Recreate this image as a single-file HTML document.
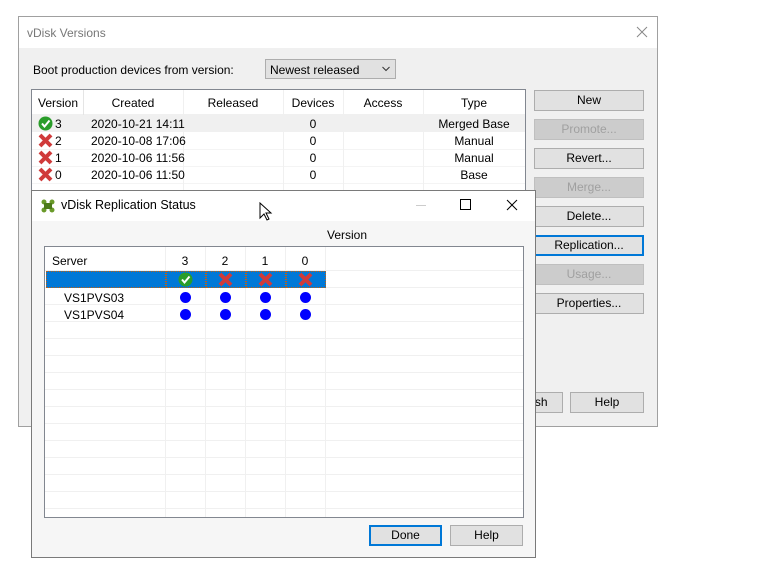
<!DOCTYPE html><html><head><style>
*{box-sizing:border-box;margin:0;padding:0}
body{width:757px;height:566px;background:#fff;position:relative;overflow:hidden;font-family:"Liberation Sans",Arial,sans-serif;font-size:12px;color:#000}
.a{position:absolute}
.btn{position:absolute;background:#e1e1e1;border:1px solid #adadad;text-align:center;line-height:18px;font-size:12px}
.dis{color:#a0a0a0;background:#cccccc;border-color:#bfbfbf}
.c{position:absolute;text-align:center}
.dot{position:absolute;width:11px;height:11px;border-radius:50%;background:#0000ff}
</style></head><body>
<div class="a" style="left:18px;top:16px;width:640px;height:411px;background:#f0f0f0;border:1px solid #a0a0a0"></div>
<div class="a" style="left:19px;top:17px;width:638px;height:31px;background:#fff"></div>
<div class="a" style="left:27px;top:26px;color:#777">vDisk Versions</div>
<svg class="a" style="left:636px;top:26px" width="12" height="12"><path d="M1 1l10 10M11 1L1 11" stroke="#888" stroke-width="1"/></svg>
<div class="a" style="left:33px;top:63px">Boot production devices from version:</div>
<div class="a" style="left:265px;top:59px;width:131px;height:20px;background:#e1e1e1;border:1px solid #adadad;padding:3px 0 0 4px">Newest released<svg class="a" style="left:116px;top:6px" width="8" height="6"><path d="M0.5 1l3.5 3.5L7.5 1" stroke="#333" fill="none"/></svg></div>
<div class="a" style="left:31px;top:89px;width:495px;height:110px;background:#fff;border:1px solid #828790"></div>
<div class="a" style="left:32px;top:115px;width:493px;height:17px;background:#f0f0f0"></div>
<div class="a" style="left:32px;top:90px;width:493px;height:25px;border-bottom:1px solid #f0f0f0"></div>
<div class="a" style="left:32px;top:149px;width:493px;height:1px;background:#f4f4f4"></div>
<div class="a" style="left:32px;top:166px;width:493px;height:1px;background:#f4f4f4"></div>
<div class="a" style="left:32px;top:183px;width:493px;height:1px;background:#f4f4f4"></div>
<div class="a" style="left:83px;top:90px;width:1px;height:25px;background:#e5e5e5"></div>
<div class="a" style="left:183px;top:90px;width:1px;height:100px;background:#f0f0f0"></div>
<div class="a" style="left:283px;top:90px;width:1px;height:100px;background:#f0f0f0"></div>
<div class="a" style="left:343px;top:90px;width:1px;height:100px;background:#f0f0f0"></div>
<div class="a" style="left:423px;top:90px;width:1px;height:100px;background:#f0f0f0"></div>
<div class="c" style="left:33px;top:96px;width:50px">Version</div>
<div class="c" style="left:83px;top:96px;width:100px">Created</div>
<div class="c" style="left:183px;top:96px;width:100px">Released</div>
<div class="c" style="left:283px;top:96px;width:60px">Devices</div>
<div class="c" style="left:343px;top:96px;width:80px">Access</div>
<div class="c" style="left:423px;top:96px;width:102px">Type</div>
<div class="a" style="left:38px;top:116px"><svg width="15" height="15"><circle cx="7.5" cy="7.5" r="7" fill="#2a9d2a"/><path d="M4 7.5l2.5 3 5-6" stroke="#fff" stroke-width="2" fill="none"/></svg></div>
<div class="a" style="left:38px;top:133px"><svg width="15" height="15"><path d="M2 2l11 11M13 2L2 13" stroke="#d03a3a" stroke-width="4"/></svg></div>
<div class="a" style="left:38px;top:150px"><svg width="15" height="15"><path d="M2 2l11 11M13 2L2 13" stroke="#d03a3a" stroke-width="4"/></svg></div>
<div class="a" style="left:38px;top:167px"><svg width="15" height="15"><path d="M2 2l11 11M13 2L2 13" stroke="#d03a3a" stroke-width="4"/></svg></div>
<div class="a" style="left:55px;top:117px">3</div><div class="a" style="left:55px;top:134px">2</div><div class="a" style="left:55px;top:151px">1</div><div class="a" style="left:55px;top:168px">0</div>
<div class="a" style="left:91px;top:117px">2020-10-21 14:11</div><div class="a" style="left:91px;top:134px">2020-10-08 17:06</div><div class="a" style="left:91px;top:151px">2020-10-06 11:56</div><div class="a" style="left:91px;top:168px">2020-10-06 11:50</div>
<div class="c" style="left:283px;top:117px;width:60px">0</div><div class="c" style="left:283px;top:134px;width:60px">0</div><div class="c" style="left:283px;top:151px;width:60px">0</div><div class="c" style="left:283px;top:168px;width:60px">0</div>
<div class="c" style="left:423px;top:117px;width:102px">Merged Base</div><div class="c" style="left:423px;top:134px;width:102px">Manual</div><div class="c" style="left:423px;top:151px;width:102px">Manual</div><div class="c" style="left:423px;top:168px;width:102px">Base</div>
<div class="btn" style="left:534px;top:90px;width:110px;height:21px">New</div>
<div class="btn dis" style="left:534px;top:119px;width:110px;height:21px">Promote...</div>
<div class="btn" style="left:534px;top:148px;width:110px;height:21px">Revert...</div>
<div class="btn dis" style="left:534px;top:177px;width:110px;height:21px">Merge...</div>
<div class="btn" style="left:534px;top:206px;width:110px;height:21px">Delete...</div>
<div class="btn" style="left:534px;top:235px;width:110px;height:21px;border:2px solid #0078d7;line-height:17px">Replication...</div>
<div class="btn dis" style="left:534px;top:264px;width:110px;height:21px">Usage...</div>
<div class="btn" style="left:534px;top:293px;width:110px;height:21px">Properties...</div>
<div class="btn" style="left:490px;top:392px;width:73px;height:21px">Refresh</div>
<div class="btn" style="left:570px;top:392px;width:74px;height:21px">Help</div>
<div class="a" style="left:31px;top:190px;width:505px;height:368px;background:#f6f6f6;border:1px solid #7a7a7a"></div>
<div class="a" style="left:32px;top:191px;width:503px;height:30px;background:#fff"></div>
<div class="a" style="left:41px;top:199px"><svg width="14" height="14"><g fill="#6a9a2a"><circle cx="3" cy="3" r="2.5"/><circle cx="11" cy="3" r="2.5"/><circle cx="3" cy="11" r="2.5"/><circle cx="11" cy="11" r="2.5"/><rect x="3" y="4" width="8" height="6" fill="#4c7a1a"/></g></svg></div>
<div class="a" style="left:61px;top:198px;font-size:12.5px">vDisk Replication Status</div>
<div class="a" style="left:416px;top:205px;width:10px;height:1px;background:#ccc"></div>
<div class="a" style="left:460px;top:199px;width:11px;height:11px;border:1px solid #000"></div>
<svg class="a" style="left:506px;top:199px" width="12" height="12"><path d="M1 1l10 10M11 1L1 11" stroke="#000" stroke-width="1"/></svg>
<svg class="a" style="left:259px;top:202px" width="14" height="20"><path d="M1 1v15l4-4 3 6 2-1-3-6h5z" fill="#fff" stroke="#000"/></svg>
<div class="a" style="left:327px;top:228px">Version</div>
<div class="a" style="left:44px;top:246px;width:480px;height:272px;background:#fff;border:1px solid #828790"></div>
<div class="a" style="left:165px;top:247px;width:1px;height:270px;background:#f0f0f0"></div>
<div class="a" style="left:205px;top:247px;width:1px;height:270px;background:#f0f0f0"></div>
<div class="a" style="left:245px;top:247px;width:1px;height:270px;background:#f0f0f0"></div>
<div class="a" style="left:285px;top:247px;width:1px;height:270px;background:#f0f0f0"></div>
<div class="a" style="left:325px;top:247px;width:1px;height:270px;background:#f0f0f0"></div>
<div class="a" style="left:45px;top:247px;width:478px;height:270px;background:repeating-linear-gradient(to bottom,transparent 0,transparent 16px,#f0f0f0 16px,#f0f0f0 17px);background-position:0 7px"></div>
<div class="a" style="left:46px;top:271px;width:120px;height:17px;background:#0078d7;border:1px dotted #c06010"></div>
<div class="a" style="left:166px;top:271px;width:40px;height:17px;background:#0078d7;border:1px dotted #c06010"></div>
<div class="a" style="left:206px;top:271px;width:40px;height:17px;background:#0078d7;border:1px dotted #c06010"></div>
<div class="a" style="left:246px;top:271px;width:40px;height:17px;background:#0078d7;border:1px dotted #c06010"></div>
<div class="a" style="left:286px;top:271px;width:40px;height:17px;background:#0078d7;border:1px dotted #c06010"></div>
<div class="a" style="left:52px;top:254px">Server</div>
<div class="c" style="left:165px;top:254px;width:40px">3</div><div class="c" style="left:205px;top:254px;width:40px">2</div><div class="c" style="left:245px;top:254px;width:40px">1</div><div class="c" style="left:285px;top:254px;width:40px">0</div>
<div class="a" style="left:178px;top:272px"><svg width="15" height="15"><circle cx="7.5" cy="7.5" r="7" fill="#2a9d2a"/><path d="M4 7.5l2.5 3 5-6" stroke="#fff" stroke-width="2" fill="none"/></svg></div>
<div class="a" style="left:218px;top:272px"><svg width="15" height="15"><path d="M2 2l11 11M13 2L2 13" stroke="#d03a3a" stroke-width="4"/></svg></div>
<div class="a" style="left:258px;top:272px"><svg width="15" height="15"><path d="M2 2l11 11M13 2L2 13" stroke="#d03a3a" stroke-width="4"/></svg></div>
<div class="a" style="left:298px;top:272px"><svg width="15" height="15"><path d="M2 2l11 11M13 2L2 13" stroke="#d03a3a" stroke-width="4"/></svg></div>
<div class="a" style="left:64px;top:291px">VS1PVS03</div><div class="a" style="left:64px;top:308px">VS1PVS04</div>
<div class="dot" style="left:180px;top:292px"></div><div class="dot" style="left:220px;top:292px"></div><div class="dot" style="left:260px;top:292px"></div><div class="dot" style="left:300px;top:292px"></div>
<div class="dot" style="left:180px;top:309px"></div><div class="dot" style="left:220px;top:309px"></div><div class="dot" style="left:260px;top:309px"></div><div class="dot" style="left:300px;top:309px"></div>
<div class="btn" style="left:369px;top:525px;width:73px;height:21px;border:2px solid #0078d7;line-height:17px">Done</div>
<div class="btn" style="left:450px;top:525px;width:73px;height:21px">Help</div>
</body></html>
